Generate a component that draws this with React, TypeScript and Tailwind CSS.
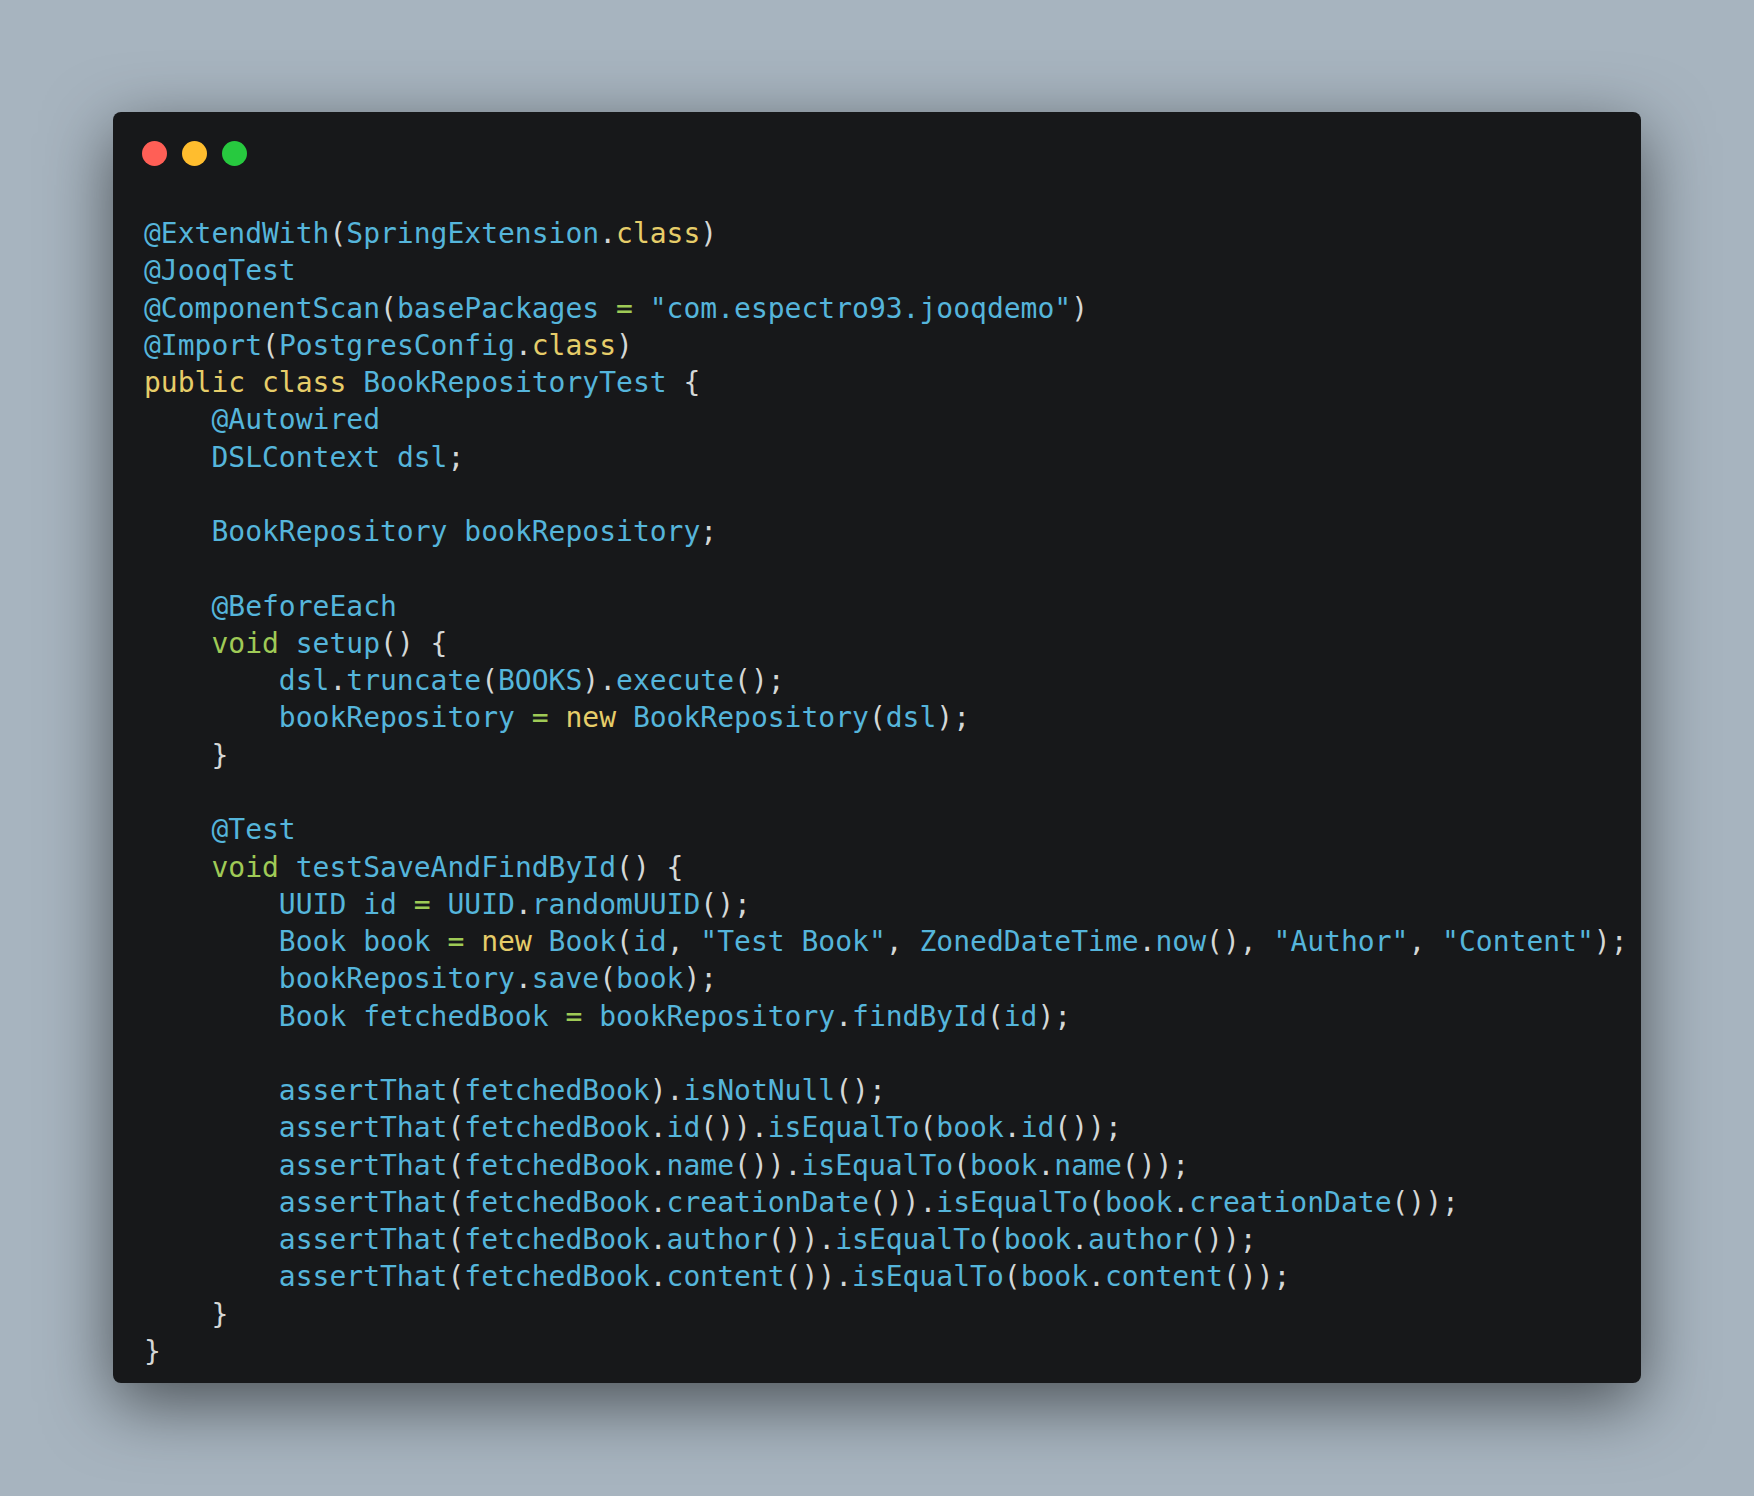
import React from "react";

const code = `@ExtendWith(SpringExtension.class)
@JooqTest
@ComponentScan(basePackages = "com.espectro93.jooqdemo")
@Import(PostgresConfig.class)
public class BookRepositoryTest {
    @Autowired
    DSLContext dsl;

    BookRepository bookRepository;

    @BeforeEach
    void setup() {
        dsl.truncate(BOOKS).execute();
        bookRepository = new BookRepository(dsl);
    }

    @Test
    void testSaveAndFindById() {
        UUID id = UUID.randomUUID();
        Book book = new Book(id, "Test Book", ZonedDateTime.now(), "Author", "Content");
        bookRepository.save(book);
        Book fetchedBook = bookRepository.findById(id);

        assertThat(fetchedBook).isNotNull();
        assertThat(fetchedBook.id()).isEqualTo(book.id());
        assertThat(fetchedBook.name()).isEqualTo(book.name());
        assertThat(fetchedBook.creationDate()).isEqualTo(book.creationDate());
        assertThat(fetchedBook.author()).isEqualTo(book.author());
        assertThat(fetchedBook.content()).isEqualTo(book.content());
    }
}`;

const keywords = ["public", "class", "new"];

const tokenClass = (t: string) => {
  if (/^\s+$/.test(t)) return "";
  if (t.startsWith('"')) return "text-[#55b5db]";
  if (keywords.includes(t)) return "text-[#e6cd69]";
  if (t === "void" || t === "=") return "text-[#9fca56]";
  if (/^[@\w]/.test(t)) return "text-[#55b5db]";
  return "text-[#d4d7d6]";
};

const Line = ({ text }: { text: string }) => {
  const tokens = text.match(/"[^"]*"|[@\w]+|\s+|./g) || [];
  return (
    <div className="h-[37.28px]">
      {tokens.map((t, i) => (
        <span key={i} className={tokenClass(t)}>
          {t}
        </span>
      ))}
    </div>
  );
};

const App = () => {
  return (
    <div className="w-[1754px] h-[1496px] bg-[#a7b4bf] px-[113px] pt-[112px]">
      <div className="w-full h-[1271px] bg-[#17181a] rounded-[8px] shadow-[0_20px_68px_rgba(0,0,0,0.55)]">
        <div className="flex gap-[15px] pl-[29px] pt-[29px]">
          <div className="w-[25px] h-[25px] rounded-full bg-[#ff5f56]" />
          <div className="w-[25px] h-[25px] rounded-full bg-[#ffbd2e]" />
          <div className="w-[25px] h-[25px] rounded-full bg-[#27c93f]" />
        </div>
        <div
          className="mt-[49px] pl-[31px] whitespace-pre text-[28px] leading-[37.28px]"
          style={{ fontFamily: '"DejaVu Sans Mono", "Liberation Mono", monospace' }}
        >
          {code.split("\n").map((l, i) => (
            <Line key={i} text={l} />
          ))}
        </div>
      </div>
    </div>
  );
};

export default App;
